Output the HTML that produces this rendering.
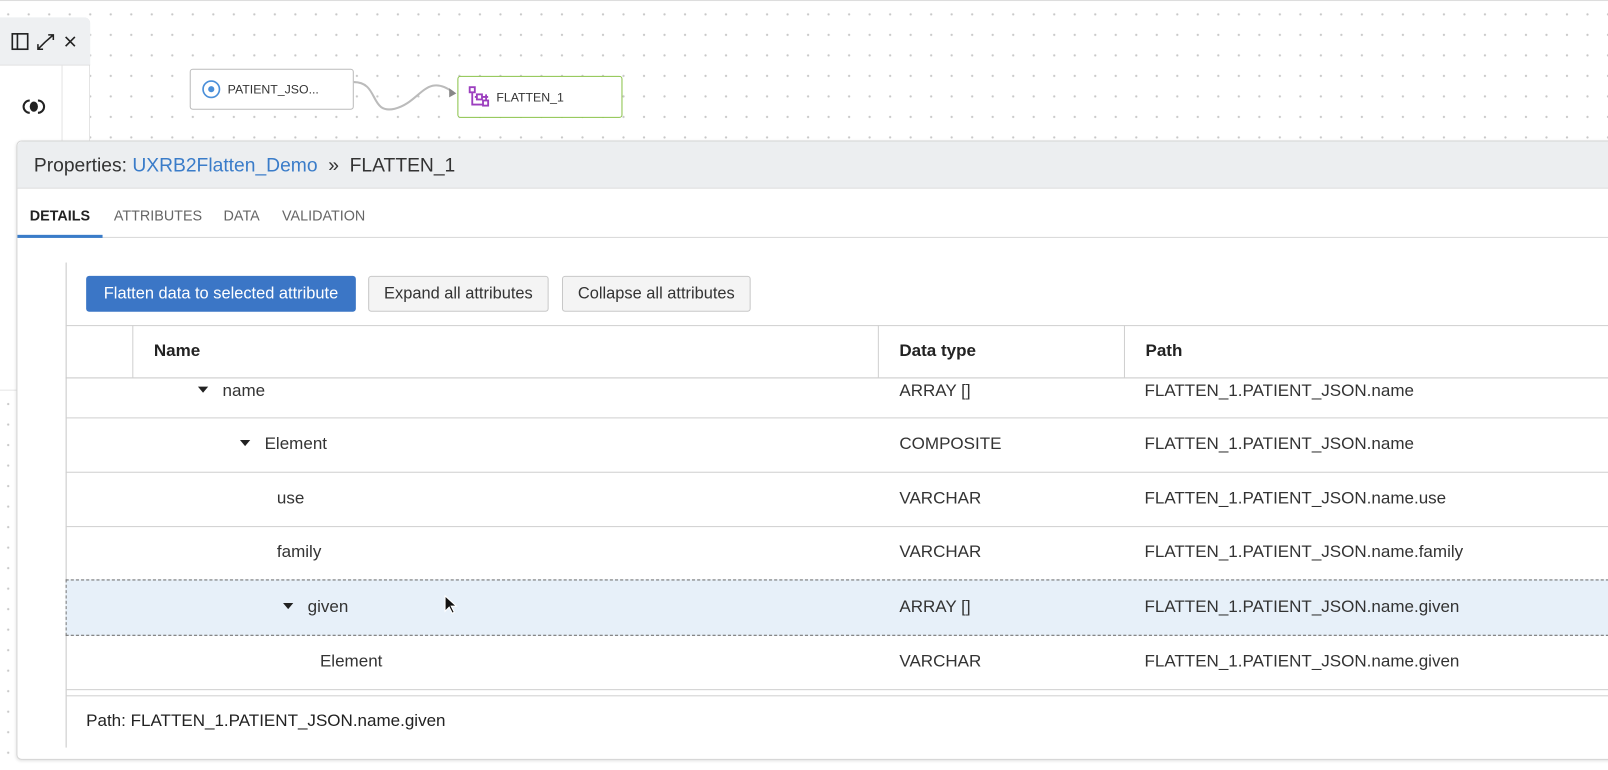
<!DOCTYPE html>
<html><head><style>
*{box-sizing:border-box;margin:0;padding:0}
html,body{width:1608px;height:770px;overflow:hidden;background:#fff}
#w{position:absolute;left:0;top:0;width:1568px;height:751px;transform:scale(1.02551);transform-origin:0 0;font-family:"Liberation Sans",Arial,sans-serif;
background-image:radial-gradient(circle,#c8c8c8 0.9px,transparent 1.3px);background-size:20px 20px;background-position:-2px 4px}
.a{position:absolute}
.t{font-size:16.6px;color:#333;position:absolute;white-space:nowrap;line-height:18px}
.hl{position:absolute;left:64px;right:0;height:1px;background:#d0d0d0}
.tri{display:inline-block;width:0;height:0;border-left:5px solid transparent;border-right:5px solid transparent;border-top:6px solid #222;vertical-align:middle;margin-right:14px;position:relative;top:-2px}
.btn{position:absolute;top:269px;height:35px;border:1px solid #c8c8c8;border-radius:3px;background:#f4f4f4;font-size:16px;color:#333;line-height:33px;text-align:center}
</style></head><body><div id="w">
<div class="a" style="left:0;top:0;width:1568px;height:1px;background:#ddd"></div>
<div class="a" style="left:0;top:17px;width:88px;height:364px;background:#fff;border:1px solid #ddd;border-left:none;border-radius:0 6px 6px 0"></div>
<div class="a" style="left:0;top:17px;width:88px;height:47px;background:#eef0f2;border-bottom:1px solid #ddd;border-radius:0 6px 0 0"></div>
<svg class="a" style="left:10px;top:31px" width="68" height="20" viewBox="0 0 68 20">
<rect x="2" y="2" width="15" height="15" fill="none" stroke="#222" stroke-width="1.6"/><line x1="7" y1="2" x2="7" y2="17" stroke="#222" stroke-width="1.6"/>
<path d="M27 17 L34 10 M27 12v5h5 M34 10 L42 3 M37 3h5v5" fill="none" stroke="#222" stroke-width="1.5"/>
<path d="M54 5l9 9M63 5l-9 9" stroke="#222" stroke-width="1.6"/></svg>
<div class="a" style="left:60px;top:64px;width:1px;height:75px;background:#e4e4e4"></div>
<svg class="a" style="left:21px;top:96px" width="24" height="16" viewBox="0 0 24 16"><path d="M8 2a6 6 0 0 0 0 12M16 2a6 6 0 0 1 0 12" fill="none" stroke="#222" stroke-width="2"/><path d="M12 3a4 5 0 0 0 0 10a4 5 0 0 0 0-10z" fill="#222"/></svg>
<div class="a" style="left:185px;top:67px;width:160px;height:40px;background:#fff;border:1px solid #bbb;border-radius:3px"></div>
<svg class="a" style="left:196px;top:77px" width="20" height="20"><circle cx="10" cy="10" r="8" fill="none" stroke="#4a8fd9" stroke-width="1.6"/><circle cx="10" cy="10" r="3" fill="#4a8fd9"/></svg>
<div class="t" style="left:222px;top:80px;font-size:12px;line-height:14px">PATIENT_JSO...</div>
<svg class="a" style="left:340px;top:70px" width="110" height="40"><path d="M5 10 C30 10,20 42,45 36 S75 0,102 20" fill="none" stroke="#bbb" stroke-width="2"/><path d="M98 16l7 5-7 4z" fill="#888"/></svg>
<div class="a" style="left:446px;top:74px;width:161px;height:41px;background:#fff;border:1px solid #8bc34a;border-radius:3px"></div>
<svg class="a" style="left:456px;top:83px" width="24" height="22" viewBox="0 0 24 22"><g fill="none" stroke="#9c3fbf" stroke-width="1.8"><rect x="2" y="2" width="5" height="5"/><rect x="9" y="9" width="5" height="5"/><rect x="15" y="15" width="5" height="5"/><path d="M4.5 7v12h10M7 11.5h2M14 11.5h6M18 9v6"/></g></svg>
<div class="t" style="left:484px;top:88px;font-size:12px;line-height:14px">FLATTEN_1</div>
<div class="a" style="left:16px;top:137px;width:1600px;height:604px;background:#fff;border:1px solid #d5d5d5;border-radius:5px;box-shadow:0 1px 3px rgba(0,0,0,.12)"></div>
<div class="a" style="left:17px;top:138px;width:1600px;height:46px;background:#eceef0;border-bottom:1px solid #d8d8d8;border-radius:5px 0 0 0"></div>
<div class="t" style="left:33px;top:150px;font-size:18.8px;line-height:22px;color:#333">Properties: <span style="color:#3a7cc9">UXRB2Flatten_Demo</span> &nbsp;»&nbsp; FLATTEN_1</div>
<div class="t" style="left:29px;top:201px;font-size:14px;font-weight:bold;color:#222">DETAILS</div>
<div class="t" style="left:111px;top:201px;font-size:14px;color:#666">ATTRIBUTES</div>
<div class="t" style="left:218px;top:201px;font-size:14px;color:#666">DATA</div>
<div class="t" style="left:275px;top:201px;font-size:14px;color:#666">VALIDATION</div>
<div class="a" style="left:17px;top:231px;width:1600px;height:1px;background:#d8d8d8"></div>
<div class="a" style="left:17px;top:229px;width:83px;height:3px;background:#3a7cc9"></div>
<div class="a" style="left:64px;top:256px;width:1px;height:473px;background:#c8c8c8"></div>
<div class="a" style="left:84px;top:269px;width:263px;height:35px;background:#3b76c6;border-radius:3px;color:#fff;font-size:16px;line-height:35px;text-align:center">Flatten data to selected attribute</div>
<div class="btn" style="left:359px;width:176px">Expand all attributes</div>
<div class="btn" style="left:548px;width:184px">Collapse all attributes</div>
<div class="hl" style="top:317px"></div>
<div class="hl" style="top:368px;background:#c8c8c8"></div>
<div class="a" style="left:129px;top:317px;width:1px;height:51px;background:#d0d0d0"></div>
<div class="a" style="left:856px;top:317px;width:1px;height:51px;background:#d0d0d0"></div>
<div class="a" style="left:1096px;top:317px;width:1px;height:51px;background:#d0d0d0"></div>
<div class="t" style="left:150px;top:333px;font-weight:bold;color:#222">Name</div>
<div class="t" style="left:877px;top:333px;font-weight:bold;color:#222">Data type</div>
<div class="t" style="left:1117px;top:333px;font-weight:bold;color:#222">Path</div>
<div class="hl" style="top:407px"></div>
<div class="hl" style="top:460px"></div>
<div class="hl" style="top:513px"></div>
<div class="a" style="left:64px;top:565px;width:1560px;height:55px;background:#e7f0f9;border:1px dashed #777"></div>
<div class="hl" style="top:672px"></div>
<div class="hl" style="top:678px"></div>
<div class="t" style="left:193px;top:372px"><span class="tri"></span>name</div>
<div class="t" style="left:877px;top:372px">ARRAY []</div>
<div class="t" style="left:1116px;top:372px">FLATTEN_1.PATIENT_JSON.name</div>
<div class="t" style="left:234px;top:424px"><span class="tri"></span>Element</div>
<div class="t" style="left:877px;top:424px">COMPOSITE</div>
<div class="t" style="left:1116px;top:424px">FLATTEN_1.PATIENT_JSON.name</div>
<div class="t" style="left:270px;top:477px">use</div>
<div class="t" style="left:877px;top:477px">VARCHAR</div>
<div class="t" style="left:1116px;top:477px">FLATTEN_1.PATIENT_JSON.name.use</div>
<div class="t" style="left:270px;top:529px">family</div>
<div class="t" style="left:877px;top:529px">VARCHAR</div>
<div class="t" style="left:1116px;top:529px">FLATTEN_1.PATIENT_JSON.name.family</div>
<div class="t" style="left:276px;top:583px"><span class="tri"></span>given</div>
<div class="t" style="left:877px;top:583px">ARRAY []</div>
<div class="t" style="left:1116px;top:583px">FLATTEN_1.PATIENT_JSON.name.given</div>
<div class="t" style="left:312px;top:636px">Element</div>
<div class="t" style="left:877px;top:636px">VARCHAR</div>
<div class="t" style="left:1116px;top:636px">FLATTEN_1.PATIENT_JSON.name.given</div>
<svg class="a" style="left:433px;top:580px" width="14" height="20"><path d="M1 1v15l4-4 3 6 2-1-3-6h5z" fill="#111" stroke="#fff" stroke-width="1"/></svg>
<div class="t" style="left:84px;top:694px;color:#222">Path: FLATTEN_1.PATIENT_JSON.name.given</div>
</div></body></html>
